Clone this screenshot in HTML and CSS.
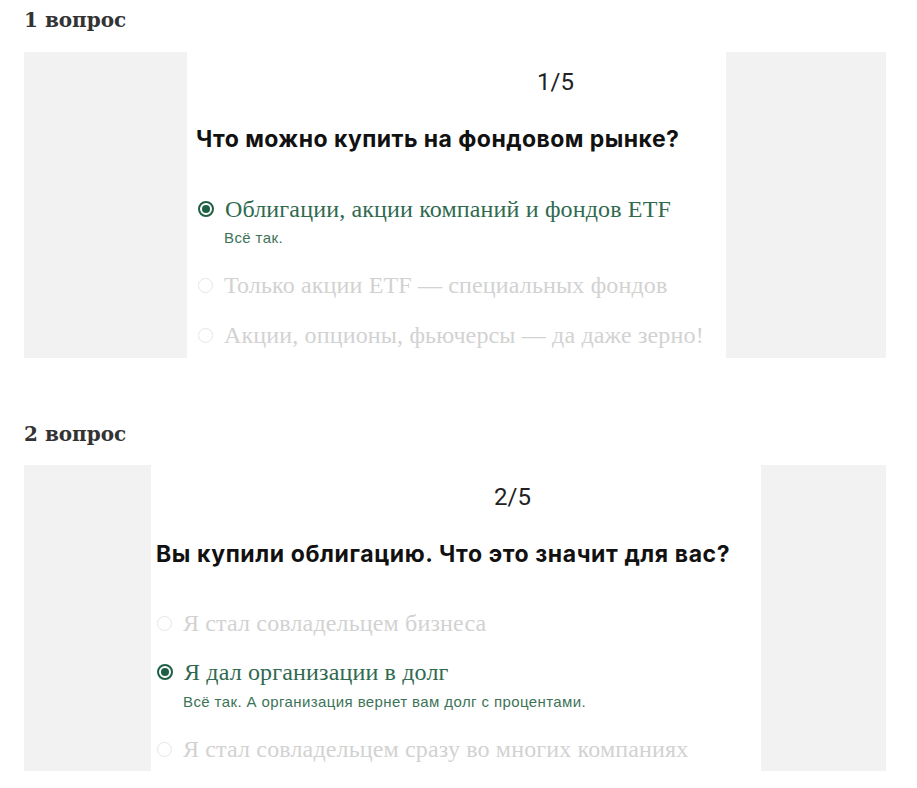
FILE: index.html
```html
<!DOCTYPE html>
<html lang="ru">
<head>
    <meta charset="UTF-8">
    <meta name="viewport" content="width=device-width, initial-scale=1.0">
    <title>Тест про фондовый рынок</title>
    <link rel="stylesheet" href="styles.css">
</head>
<body>
    <h2 class="step-title">1 вопрос</h2>
    <div class="shot">
        <div class="card card-first">
            <div class="counter">1/5</div>
            <p class="question">Что можно купить на фондовом рынке?</p>

            <div class="answer answer-right">
                <span class="radio radio-on"></span>
                <span class="answer-text">Облигации, акции компаний и фондов ETF</span>
            </div>
            <p class="hint">Всё так.</p>

            <div class="answer answer-off">
                <span class="radio"></span>
                <span class="answer-text">Только акции ETF — специальных фондов</span>
            </div>

            <div class="answer answer-off">
                <span class="radio"></span>
                <span class="answer-text">Акции, опционы, фьючерсы — да даже зерно!</span>
            </div>
        </div>
    </div>

    <h2 class="step-title second">2 вопрос</h2>
    <div class="shot">
        <div class="card card-second">
            <div class="counter">2/5</div>
            <p class="question">Вы купили облигацию. Что это значит для вас?</p>

            <div class="answer answer-off">
                <span class="radio"></span>
                <span class="answer-text">Я стал совладельцем бизнеса</span>
            </div>

            <div class="answer answer-right">
                <span class="radio radio-on"></span>
                <span class="answer-text">Я дал организации в долг</span>
            </div>
            <p class="hint">Всё так. А организация вернет вам долг с процентами.</p>

            <div class="answer answer-off">
                <span class="radio"></span>
                <span class="answer-text">Я стал совладельцем сразу во многих компаниях</span>
            </div>
        </div>
    </div>
</body>
</html>
```

FILE: styles.css
```css
body {
    margin: 0;
    padding: 0 31px 0 24px;
    background-color: #fff;
    color: #333;
}

.step-title {
    font-family: "DejaVu Serif", Georgia, serif;
    font-size: 20px;
    font-weight: bold;
    line-height: 24px;
    margin: 8px 0 20px;
    color: #333;
}

.step-title.second {
    margin-top: 64px;
    margin-bottom: 19px;
}

/* серый фон скриншота */
.shot {
    background-color: #f2f2f2;
    height: 306px;
    display: flex;
    overflow: hidden;
}

.card {
    background-color: #fff;
    height: 100%;
    box-sizing: border-box;
}

.card-first {
    margin-left: 163px;
    width: 539px;
    padding-left: 9px;
}

.card-second {
    margin-left: 127px;
    width: 610px;
    padding-left: 5px;
    padding-top: 2px;
}

.counter {
    font-family: Roboto, "Liberation Sans", sans-serif;
    font-weight: 400;
    font-size: 24px;
    color: #222;
    height: 60px;
    line-height: 60px;
    padding-left: 341px;
}

.card-second .counter {
    padding-left: 338px;
}

.question {
    font-family: Inter, "Liberation Sans", sans-serif;
    font-weight: 700;
    font-size: 23px;
    line-height: 30px;
    letter-spacing: 0.45px;
    color: #111;
    margin: 12px 0 40px;
}

.card-second .question {
    margin-top: 12px;
    margin-bottom: 39px;
    letter-spacing: 0.6px;
}

.answer {
    display: flex;
    align-items: center;
    height: 30px;
    margin-bottom: 20px;
    padding-left: 2px;
}

.card-second .answer {
    padding-left: 1px;
    margin-bottom: 19px;
}

.answer-text {
    font-family: "Liberation Serif", Georgia, serif;
    font-size: 24px;
    letter-spacing: 0.15px;
    margin-left: 11px;
}

.answer-right .answer-text {
    color: #2f6a4f;
}

.answer-off .answer-text {
    color: #d2d2d2;
}

.radio {
    width: 13px;
    height: 13px;
    border: 1px solid #e6e6e6;
    border-radius: 50%;
    display: inline-block;
    position: relative;
    flex-shrink: 0;
}

.radio-on {
    border: 2px solid #1f5f45;
    width: 12px;
    height: 12px;
}

.radio-on::after {
    content: "";
    position: absolute;
    left: 2px;
    top: 2px;
    width: 8px;
    height: 8px;
    border-radius: 50%;
    background-color: #1f5f45;
}

.hint {
    font-family: "Liberation Sans", Arial, sans-serif;
    font-size: 15px;
    letter-spacing: 0.4px;
    line-height: 18px;
    color: #3d7358;
    margin: -15px 0 23px 28px;
}

.card-second .hint {
    margin-top: -13px;
    margin-bottom: 23px;
    margin-left: 27px;
}
```
